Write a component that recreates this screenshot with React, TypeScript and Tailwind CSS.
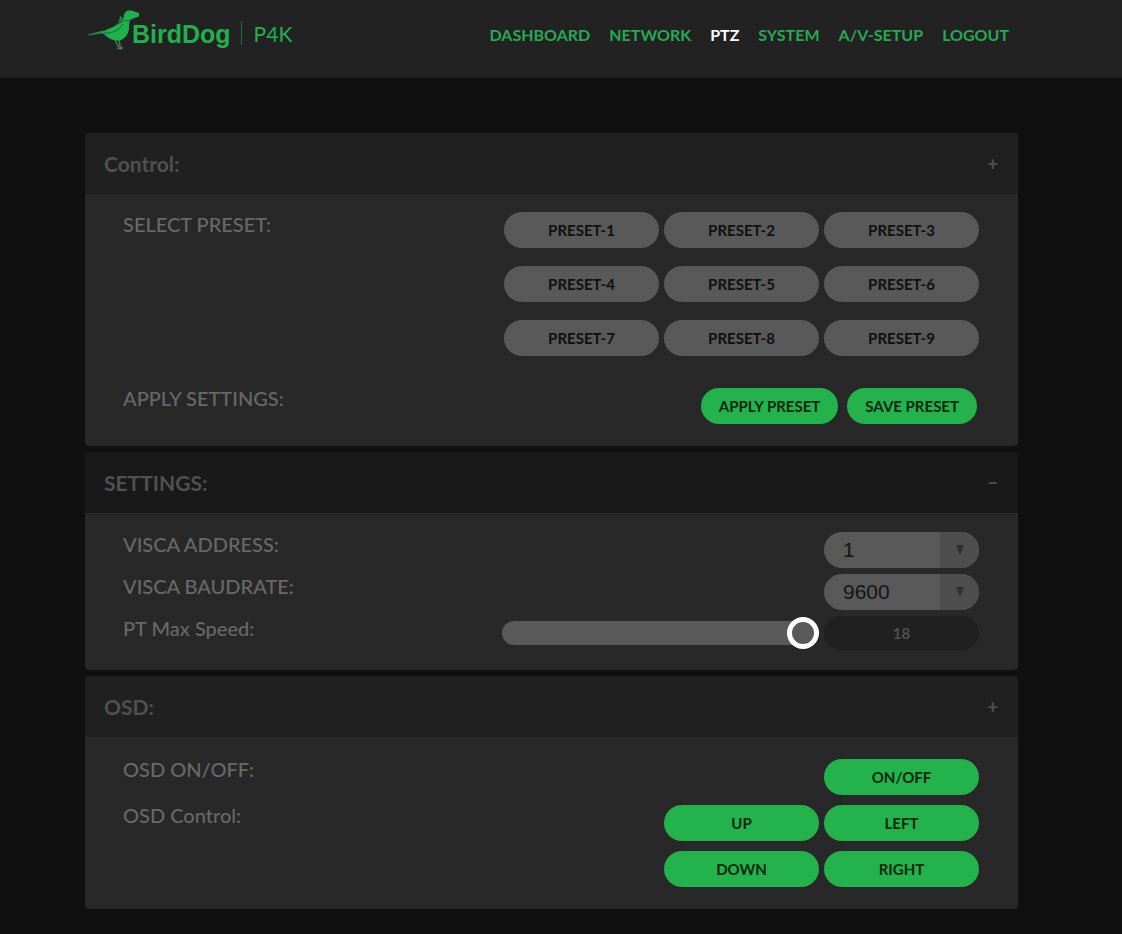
import { useState } from 'react';
import type { ReactNode } from 'react';

const navItems = ['DASHBOARD', 'NETWORK', 'PTZ', 'SYSTEM', 'A/V-SETUP', 'LOGOUT'];
const presets = [1, 2, 3, 4, 5, 6, 7, 8, 9];

function BirdLogo() {
  return (
    <svg viewBox="0 0 54 42" className="w-[54px] h-[42px] shrink-0" aria-hidden="true">
      <path d="M0 25.5L15 21.5L17 24L0 26.5Z" fill="#2b8a49" />
      <path d="M36 7C36 2.500 40 0.500 45 2L51 4V7.500L45 9.500C42 11 41 13 41 17C41.500 24 38 29 32 31.500C26 33 18 28 14 23C18 20 23 19.500 27 17L32 13C35 11 36 9 36 7Z" fill="#1fb14c" />
      <path d="M30 16L32 6.500L35 9V13Z" fill="#23763d" />
      <path d="M16 24C22 25 31 22 35 15M36 11C39 12.500 41 12 43 10" stroke="#17642f" strokeWidth="1" fill="none" />
      <path d="M27 31L30 37L35 39M31 31L32 37M29 39L34 40" stroke="#4a7a58" strokeWidth="1.500" fill="none" />
    </svg>
  );
}

function Header() {
  return (
    <header className="bg-[#222222] h-[78px] pl-[88px] pr-[113px] pt-[9px]">
      <div className="flex items-start justify-between">
        <a href="#" className="flex items-center text-[#1fb14c]">
          <BirdLogo />
          <span className="-ml-[10px] pt-2 font-['Liberation_Sans',sans-serif] font-bold text-[25px] leading-8">BirdDog</span>
          <span className="ml-[10px] mt-[6px] h-6 border-l border-[#28683c]"></span>
          <span className="ml-3 pt-2 text-[21px] leading-8">P4K</span>
        </a>
        <nav className="flex gap-[19px] pt-[13px] text-base leading-[26px] font-bold">
          {navItems.map((item) => (
            <a key={item} href="#" className={item === 'PTZ' ? 'text-white' : 'text-[#27a852]'}>
              {item}
            </a>
          ))}
        </nav>
      </div>
    </header>
  );
}

function Panel({ title, open, children }: { title: string; open?: boolean; children: ReactNode }) {
  return (
    <section className="rounded-sm overflow-hidden bg-[#282828]">
      <button
        className={`flex w-full items-center justify-between h-[61px] pl-[19px] pr-5 font-bold text-[#505050] ${
          open ? 'bg-[#191919]' : 'bg-[#202020]'
        }`}
      >
        <span className="text-[21px]">{title}</span>
        <span className="text-lg">{open ? '−' : '+'}</span>
      </button>
      <div className="pl-[38px] pr-[39px]">{children}</div>
    </section>
  );
}

function Row({ label, htmlFor, children }: { label: string; htmlFor?: string; children: ReactNode }) {
  return (
    <div className="flex items-start justify-between">
      <label htmlFor={htmlFor} className="text-xl leading-6 font-medium text-[#686868]">
        {label}
      </label>
      {children}
    </div>
  );
}

function Pill({ children, className }: { children: ReactNode; className: string }) {
  return <button className={`h-9 rounded-full text-[15px] font-bold ${className}`}>{children}</button>;
}

function Select({ id, options }: { id: string; options: string[] }) {
  return (
    <div className="relative w-[155px] h-9 rounded-full overflow-hidden bg-[#595959]">
      <select
        id={id}
        className="appearance-none w-full h-full pl-[19px] pr-10 text-[21px] text-[#151515] font-['Liberation_Sans',sans-serif] outline-none"
      >
        {options.map((option) => (
          <option key={option}>{option}</option>
        ))}
      </select>
      <div className="pointer-events-none absolute inset-y-0 right-0 w-[39px] flex items-center justify-center bg-[#4e4e4e]">
        <svg viewBox="0 0 10 10" className="w-[10px] h-[10px]">
          <path d="M1 0H9L5 10Z" fill="#303030" />
        </svg>
      </div>
    </div>
  );
}

export default function App() {
  const [speed, setSpeed] = useState(18);

  return (
    <div className="min-h-screen bg-[#101010] font-['Lato',sans-serif]">
      <Header />
      <main className="flex flex-col gap-[6px] pt-[55px] pb-[25px] pl-[85px] pr-[104px]">
        <Panel title="Control:">
          <div className="pt-[18px] pb-[22px]">
            <Row label="SELECT PRESET:">
              <div className="grid grid-cols-3 gap-x-[5px] gap-y-[18px]">
                {presets.map((n) => (
                  <Pill key={n} className="w-[155px] bg-[#595959] text-[#101010]">
                    PRESET-{n}
                  </Pill>
                ))}
              </div>
            </Row>
            <div className="pt-[30px]">
              <Row label="APPLY SETTINGS:">
                <div className="flex gap-[9px] pt-[2px] pr-[2px]">
                  <Pill className="px-[18px] bg-[#24b24c] text-[#06280f]">APPLY PRESET</Pill>
                  <Pill className="px-[18px] bg-[#24b24c] text-[#06280f]">SAVE PRESET</Pill>
                </div>
              </Row>
            </div>
          </div>
        </Panel>

        <Panel title="SETTINGS:" open>
          <div className="flex flex-col gap-[6px] pt-[19px] pb-5">
            <Row label="VISCA ADDRESS:" htmlFor="address">
              <Select id="address" options={['1', '2', '3', '4', '5', '6', '7']} />
            </Row>
            <Row label="VISCA BAUDRATE:" htmlFor="baudrate">
              <Select id="baudrate" options={['9600', '19200', '38400']} />
            </Row>
            <Row label="PT Max Speed:" htmlFor="speed">
              <div className="flex items-center gap-[5px]">
                <input
                  id="speed"
                  type="range"
                  min={1}
                  max={18}
                  value={speed}
                  onChange={(e) => setSpeed(Number(e.target.value))}
                  className="appearance-none w-[317px] h-8 bg-transparent [&::-webkit-slider-runnable-track]:h-6 [&::-webkit-slider-runnable-track]:rounded-full [&::-webkit-slider-runnable-track]:bg-[#595959] [&::-webkit-slider-thumb]:appearance-none [&::-webkit-slider-thumb]:size-8 [&::-webkit-slider-thumb]:-mt-1 [&::-webkit-slider-thumb]:rounded-full [&::-webkit-slider-thumb]:border-[5px] [&::-webkit-slider-thumb]:border-white [&::-webkit-slider-thumb]:bg-[#595959]"
                />
                <output htmlFor="speed" className="w-[155px] h-[34px] rounded-full bg-[#202020] text-center text-[15px] leading-[34px] font-bold text-[#505050]">
                  {speed}
                </output>
              </div>
            </Row>
          </div>
        </Panel>

        <Panel title="OSD:">
          <div className="flex flex-col gap-2 pt-5 pb-[22px]">
            <Row label="OSD ON/OFF:">
              <div className="pt-[2px]">
                <Pill className="w-[155px] bg-[#24b24c] text-[#06280f]">ON/OFF</Pill>
              </div>
            </Row>
            <Row label="OSD Control:">
              <div className="grid grid-cols-2 gap-x-[5px] gap-y-[10px] pt-[2px]">
                {['UP', 'LEFT', 'DOWN', 'RIGHT'].map((name) => (
                  <Pill key={name} className="w-[155px] bg-[#24b24c] text-[#06280f]">
                    {name}
                  </Pill>
                ))}
              </div>
            </Row>
          </div>
        </Panel>
      </main>
    </div>
  );
}
